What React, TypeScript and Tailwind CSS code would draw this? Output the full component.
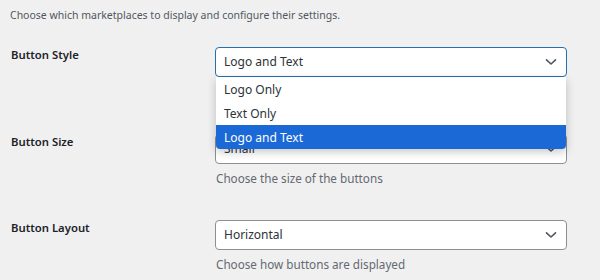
import React from "react";

const font = { fontFamily: '"Noto Sans", "Open Sans", sans-serif' };

function Chevron({ className = "" }: { className?: string }) {
  return (
    <svg width="12" height="8" viewBox="0 0 12 8" className={className}>
      <path d="M1.5 1.8 L6 6 L10.5 1.8" fill="none" stroke="#50575e" strokeWidth="1.6" strokeLinecap="round" strokeLinejoin="round" />
    </svg>
  );
}

function Select({ value, focused = false }: { value: string; focused?: boolean }) {
  return (
    <div
      className={`flex h-[30px] w-[352px] items-center justify-between rounded-[4px] border bg-white pl-[8px] pr-[9px] text-[12px] text-[#2c3338] ${
        focused ? "border-[#2271b1]" : "border-[#8c8f94]"
      }`}
    >
      <span>{value}</span>
      <Chevron />
    </div>
  );
}

function Row({ label, value, desc, focused, children }: { label: string; value: string; desc: string; focused?: boolean; children?: React.ReactNode }) {
  return (
    <div className="flex pt-[16px] pb-[16.5px]">
      <div className="w-[205px] pl-[1px] text-[11.3px] font-semibold leading-[16px] text-[#1d2327]">{label}</div>
      <div className="relative w-[352px]">
        <Select value={value} focused={focused} />
        <div className="mt-[4px] pl-[1px] text-[11.7px] leading-[20px] text-[#646970]">{desc}</div>
        {children}
      </div>
    </div>
  );
}

export default function App() {
  return (
    <div className="h-[280px] w-[600px] overflow-hidden bg-[#f0f0f1] pl-[10px]" style={font}>
      <div className="pt-[5px] text-[10.5px] leading-[20px] text-[#50575e]">
        Choose which marketplaces to display and configure their settings.
      </div>
      <div className="mt-[6px] relative z-10">
        <Row label="Button Style" value="Logo and Text" desc="Choose the style of the buttons" focused>
          <div className="absolute left-[1px] top-[30px] z-20 w-[350px] overflow-hidden rounded-b-[4px] bg-white text-[12px] shadow-[0_3px_10px_rgba(0,0,0,0.22)]">
            <div className="flex h-[24px] items-center pl-[8px] pt-[1px] text-[#2c3338]">Logo Only</div>
            <div className="flex h-[24px] items-center pl-[8px] pt-[1px] text-[#2c3338]">Text Only</div>
            <div className="flex h-[24px] items-center pl-[8px] pt-[1px] text-white bg-[#1a69d6]">Logo and Text</div>
          </div>
        </Row>
      </div>
      <Row label="Button Size" value="Small" desc="Choose the size of the buttons" />
      <Row label="Button Layout" value="Horizontal" desc="Choose how buttons are displayed" />
    </div>
  );
}
